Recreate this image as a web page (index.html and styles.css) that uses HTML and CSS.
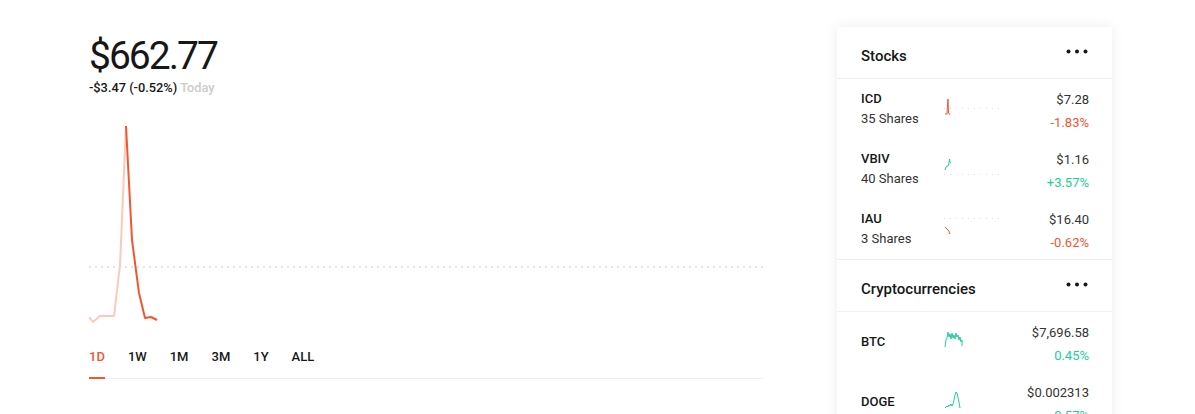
FILE: index.html
```html
<!DOCTYPE html>
<html lang="en">
<head>
    <meta charset="UTF-8">
    <title>Portfolio</title>
    <link rel="stylesheet" href="styles.css">
</head>
<body>
    <div class="page">
        <div class="main">
            <h1 class="value">$662.77</h1>
            <div class="change">-$3.47 (-0.52%) <span class="muted">Today</span></div>

            <svg class="chart" width="677" height="220" viewBox="0 0 677 220">
                <line x1="0" y1="157" x2="677" y2="157" stroke="#dcdcdc" stroke-width="1.5" stroke-dasharray="2 4"/>
                <polyline points="0,207 4,212 11,206 25,206 31,155 37,16" fill="none" stroke="#fcc9bc" stroke-width="2" stroke-linejoin="round"/>
                <polyline points="37,16 43,130 50,183 56,208 62,207 68,210" fill="none" stroke="#f45531" stroke-width="2" stroke-linejoin="round"/>
            </svg>

            <div class="tabs">
                <a class="tab active">1D</a>
                <a class="tab">1W</a>
                <a class="tab">1M</a>
                <a class="tab">3M</a>
                <a class="tab">1Y</a>
                <a class="tab">ALL</a>
            </div>
        </div>

        <div class="sidebar">
            <div class="card-header">
                <span class="title">Stocks</span>
                <svg class="dots" width="22" height="5" viewBox="0 0 22 5">
                    <circle cx="2.5" cy="2.5" r="2" fill="#171718"/>
                    <circle cx="11" cy="2.5" r="2" fill="#171718"/>
                    <circle cx="19.5" cy="2.5" r="2" fill="#171718"/>
                </svg>
            </div>
            <div class="row">
                <div class="name"><b>ICD</b><span>35 Shares</span></div>
                <svg class="spark" width="58" height="40" viewBox="0 0 58 40">
                    <line x1="0" y1="19.5" x2="58" y2="19.5" stroke="#dedede" stroke-dasharray="1 5"/>
                    <polyline points="1,25 3,25 3.5,16 4,10 4.5,24 5.5,25 6,26" fill="none" stroke="#f45531" stroke-width="1"/>
                </svg>
                <div class="nums"><span>$7.28</span><span class="down">-1.83%</span></div>
            </div>
            <div class="row">
                <div class="name"><b>VBIV</b><span>40 Shares</span></div>
                <svg class="spark" width="58" height="40" viewBox="0 0 58 40">
                    <line x1="0" y1="25.5" x2="58" y2="25.5" stroke="#dedede" stroke-dasharray="1 5"/>
                    <polyline points="1,21 2,18 4,17 5,14 5.5,10 6,13 7,14" fill="none" stroke="#21ce99" stroke-width="1"/>
                </svg>
                <div class="nums"><span>$1.16</span><span class="up">+3.57%</span></div>
            </div>
            <div class="row">
                <div class="name"><b>IAU</b><span>3 Shares</span></div>
                <svg class="spark" width="58" height="40" viewBox="0 0 58 40">
                    <line x1="0" y1="9.5" x2="58" y2="9.5" stroke="#dedede" stroke-dasharray="1 5"/>
                    <polyline points="1,18 3,20 4,21 5,22 5.5,25 6,24" fill="none" stroke="#f45531" stroke-width="1"/>
                </svg>
                <div class="nums"><span>$16.40</span><span class="down">-0.62%</span></div>
            </div>

            <div class="card-header section">
                <span class="title">Cryptocurrencies</span>
                <svg class="dots" width="22" height="5" viewBox="0 0 22 5">
                    <circle cx="2.5" cy="2.5" r="2" fill="#171718"/>
                    <circle cx="11" cy="2.5" r="2" fill="#171718"/>
                    <circle cx="19.5" cy="2.5" r="2" fill="#171718"/>
                </svg>
            </div>
            <div class="row">
                <div class="name"><b>BTC</b></div>
                <svg class="spark" width="58" height="40" viewBox="0 0 58 40">
                    <polyline points="1,25 2,18 3,16 4,10 5,15 6,12 7,17 8,11 9,16 10,13 11,17 12,11 13,15 14,13 15,18 16,15 17,20 18,18 18,24" fill="none" stroke="#21ce99" stroke-width="1"/>
                </svg>
                <div class="nums"><span>$7,696.58</span><span class="up">0.45%</span></div>
            </div>
            <div class="row">
                <div class="name"><b>DOGE</b></div>
                <svg class="spark" width="58" height="40" viewBox="0 0 58 40">
                    <polyline points="1,26 2,25 3,24 4,25 5,23 6,24 7,22 8,24 9,22 10,18 11,13 12,10 13,11 14,16 15,20 16,26" fill="none" stroke="#21ce99" stroke-width="1"/>
                </svg>
                <div class="nums"><span>$0.002313</span><span class="up">0.57%</span></div>
            </div>
        </div>
    </div>
</body>
</html>
```

FILE: styles.css
```css
body {
    margin: 0;
    padding: 0;
    font-family: Roboto, sans-serif;
    color: #171718;
    background: #fff;
}

.page {
    display: flex;
    align-items: flex-start;
    padding: 27px 0 0 89px;
}

.main {
    width: 677px;
    margin-right: 71px;
}

.value {
    margin: 6px 0 0;
    font-size: 39px;
    font-weight: 400;
    letter-spacing: -2px;
    line-height: 46px;
}

.change {
    font-size: 12.8px;
    font-weight: 500;
    margin-top: 1px;
}

.muted {
    color: #cbcbcd;
}

.chart {
    display: block;
    margin-top: 15px;
}

.tabs {
    display: flex;
    margin-top: 9px;
    width: 675px;
    border-bottom: 1px solid #efefef;
}

.tab {
    font-size: 13px;
    font-weight: 500;
    padding: 10px 0 13px;
    margin-right: 23px;
    border-bottom: 2px solid transparent;
    margin-bottom: -1px;
}

.tab.active {
    color: #f45531;
    border-bottom-color: #f45531;
}

.sidebar {
    width: 275px;
    box-shadow: 0 0 12px rgba(0, 0, 0, 0.08);
    background: #fff;
}

.card-header {
    display: flex;
    justify-content: space-between;
    align-items: center;
    height: 51px;
    padding: 0 24px 0 24px;
    border-bottom: 1px solid #efefef;
}

.card-header.section {
    border-top: 1px solid #efefef;
}

.title {
    font-size: 15px;
    font-weight: 500;
    padding-top: 6px;
}

.dots {
    display: block;
    margin-bottom: 2px;
}

.row {
    display: flex;
    align-items: center;
    height: 60px;
    padding: 0 23px 0 24px;
    font-size: 13px;
}

.name {
    display: flex;
    flex-direction: column;
    width: 83px;
    line-height: 20px;
}

.name b {
    font-weight: 500;
}

.name span {
    color: #333;
}

.spark {
    display: block;
}

.nums {
    flex: 1;
    display: flex;
    flex-direction: column;
    align-items: flex-end;
    line-height: 23px;
    padding-top: 3px;
    color: #333;
}

.up {
    color: #21ce99;
}

.down {
    color: #f45531;
}
```
